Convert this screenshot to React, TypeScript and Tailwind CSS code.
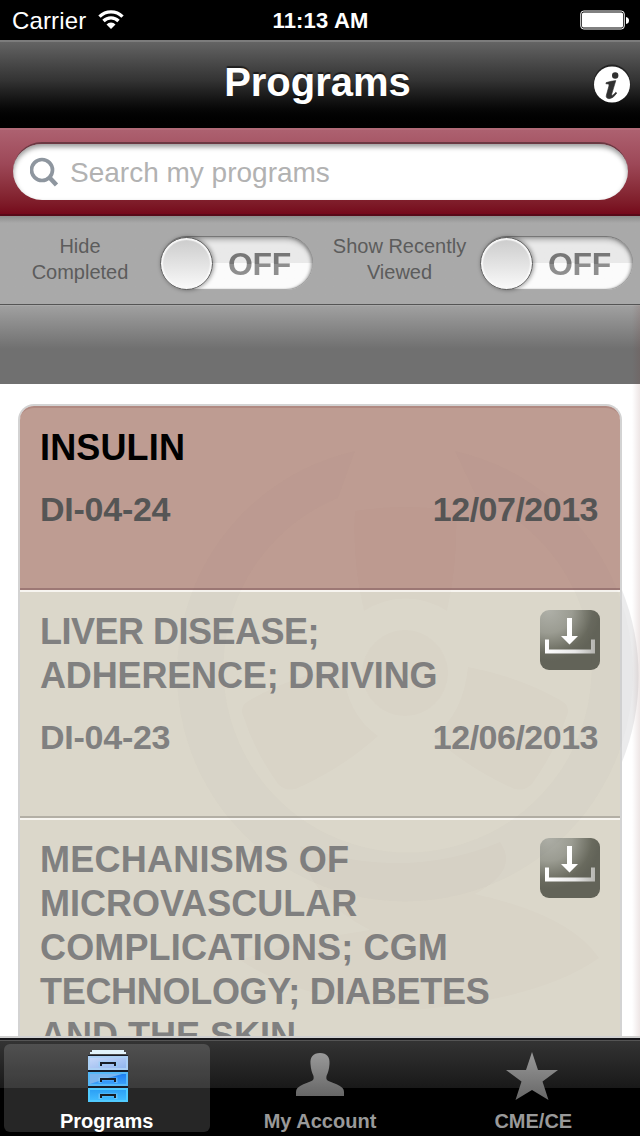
import React, { FC, ReactNode } from "react";

type TitleLine = { text: string; className?: string };

type Program = {
  title: TitleLine[];
  code?: string;
  date?: string;
  downloaded?: boolean;
};

const programs: Program[] = [
  {
    title: [{ text: "INSULIN", className: "tracking-[0.15px]" }],
    code: "DI-04-24",
    date: "12/07/2013",
    downloaded: true,
  },
  {
    title: [
      { text: "LIVER DISEASE;", className: "tracking-[-0.5px]" },
      { text: "ADHERENCE; DRIVING", className: "tracking-[-0.15px]" },
    ],
    code: "DI-04-23",
    date: "12/06/2013",
  },
  {
    title: [
      { text: "MECHANISMS OF", className: "tracking-[0.25px]" },
      { text: "MICROVASCULAR" },
      { text: "COMPLICATIONS; CGM", className: "tracking-[0.15px]" },
      { text: "TECHNOLOGY; DIABETES", className: "tracking-[-0.3px]" },
      { text: "AND THE SKIN" },
    ],
  },
];

const StatusBar = () => (
  <div className="grid h-10 grid-cols-3 items-center bg-black pr-[11px] pl-3 text-white">
    <div className="flex items-center gap-3">
      <span className="pt-px text-2xl tracking-[0.15px]">Carrier</span>
      <svg width="26" height="20" viewBox="0 0 26 20" fill="none">
        <path d="M1.500 6.700a16 16 0 0 1 23 0" stroke="#fff" strokeWidth="3.300" />
        <path d="M5.500 11a10.500 10.500 0 0 1 15 0" stroke="#fff" strokeWidth="3.300" />
        <path d="M13 19l-4.500-4.500a6 6 0 0 1 9 0z" fill="#fff" />
      </svg>
    </div>
    <span className="pt-px text-center text-[22px] font-bold tracking-[0.2px]">11:13 AM</span>
    <svg className="justify-self-end" width="49" height="20" viewBox="0 0 49 20">
      <rect x=".75" y="1" width="43.5" height="18" rx="3" fill="none" stroke="#fff" />
      <rect x="2" y="2.5" width="41" height="15" rx="1.5" fill="#fff" />
      <path d="M46 7q3 .5 3 3.5t-3 3.5z" fill="#fff" />
    </svg>
  </div>
);

const NavBar = () => (
  <div className="grid h-[88px] grid-cols-[1fr_auto_1fr] items-center border-t-2 border-[#7c7c7c] bg-linear-to-b from-[#646464] via-[#333] via-45% to-black pr-[9px] pl-1">
    <span />
    <h1 className="pb-1.5 text-[40px] leading-[46px] font-bold text-white [text-shadow:0_-2px_1px_rgba(0,0,0,.55)]">
      Programs
    </h1>
    <svg className="mb-0.5 justify-self-end" width="38" height="40" viewBox="0 0 38 40">
      <circle cx="19" cy="19" r="18.5" fill="#222" />
      <circle cx="19" cy="20.5" r="18" fill="#fff" />
      <circle cx="22.2" cy="11.5" r="3.2" fill="#303030" />
      <path
        d="M13.200 18.600q5-1.600 9.600-2l-4 13.200q-.5 1.700.5 1.600 1.300-.2 3.400-3.100l1.100.8q-3.700 5.700-7.700 5.600-3.600-.2-2.700-3.600l2.500-9q.6-2-.7-2.200l-2.300-.1z"
        fill="#303030"
        stroke="#303030"
        strokeWidth=".6"
      />
    </svg>
  </div>
);

const SearchBar = () => (
  <div className="h-[88px] border-t-2 border-b-2 border-t-[#b06a77] border-b-[#580918] bg-linear-to-b from-[#ad6170] via-[#9d4858] via-40% to-[#75081b] pt-3 pr-3 pl-[13px]">
    <div className="flex h-[58px] items-center rounded-full border-t-2 border-[#6b3842] bg-white pl-[17px] shadow-[inset_0_3px_5px_rgba(0,0,0,.4)]">
      <svg width="29" height="31" viewBox="0 0 29 31" fill="none" stroke="#8e969f">
        <circle cx="12" cy="13" r="10.5" strokeWidth="3.7" />
        <path d="M19 20l7.500 8" strokeWidth="4.5" />
      </svg>
      <span className="pt-0.5 pl-[11px] text-[28px] text-[#b2b2b2]">Search my programs</span>
    </div>
  </div>
);

const Toggle = () => (
  <div className="flex h-[54px] w-[153px] items-center rounded-full border-t border-[#777] bg-linear-to-b from-[#e9e9e9] from-50% to-[#fbfbfb] to-50% shadow-[inset_0_3px_5px_rgba(0,0,0,.25),inset_-2px_0_3px_rgba(0,0,0,.25),inset_0_-1px_1px_#bbb]">
    <div className="h-[53px] w-[53px] shrink-0 rounded-full border border-[#5c5c5c] bg-linear-to-b from-[#cbcbcb] to-[#fafafa] shadow-[inset_0_0_1px_2px_#f8f8f8,1px_0_4px_rgba(0,0,0,.4)]" />
    <span className="bg-linear-to-b from-[#777] from-50% to-[#8e8e8e] to-50% bg-clip-text pl-[15px] text-[32px] leading-[38px] font-bold tracking-[-0.4px] text-transparent">
      OFF
    </span>
  </div>
);

const FilterLabel: FC<{ children: ReactNode }> = ({ children }) => (
  <p className="pb-[3px] text-center text-xl leading-[26px] text-[#5c5c5c]">{children}</p>
);

const Filters = () => (
  <div className="grid h-[89px] grid-cols-[160px_153px_173px_154px] items-center border-b border-[#555] bg-linear-to-b from-[#8c8c8c] to-[#a9a9a9] to-8%">
    <FilterLabel>
      Hide
      <br />
      Completed
    </FilterLabel>
    <div className="pt-1.5">
      <Toggle />
    </div>
    <FilterLabel>
      Show Recently
      <br />
      Viewed
    </FilterLabel>
    <div className="-ml-[6px] pt-1.5">
      <Toggle />
    </div>
  </div>
);

const DownloadIcon: FC<{ id: string }> = ({ id }) => (
  <svg className="h-[60px] w-[60px] shrink-0" viewBox="0 0 60 60">
    <defs>
      <radialGradient id={id} cx=".15" cy="0" r=".85">
        <stop offset="0" stopColor="#afb0a8" />
        <stop offset=".45" stopColor="#9b9c92" />
        <stop offset=".85" stopColor="#696a5e" />
        <stop offset="1" stopColor="#626358" />
      </radialGradient>
      <linearGradient id={`${id}-tray`} x1="0" x2="1">
        <stop offset="0" stopColor="#fff" />
        <stop offset=".6" stopColor="#e8e8e8" />
        <stop offset="1" stopColor="#b5b5b0" />
      </linearGradient>
    </defs>
    <rect width="60" height="60" rx="9" fill={`url(#${id})`} />
    <path d="M5 29.500h4V39.500h42V29.500h4V43.500H5z" fill={`url(#${id}-tray)`} />
    <path d="M27 8h5v18h6l-8.500 8.500L21 26h6z" fill="#fff" />
  </svg>
);

const ProgramRow: FC<{ program: Program; index: number }> = ({ program, index }) => (
  <li
    className={
      program.downloaded
        ? "h-[184px] rounded-t-[14px] border-t-2 border-b-2 border-t-[#b08981] border-b-[#9d7875] bg-[#be9c92] pt-[18px]"
        : "min-h-[228px] border-t-2 border-b-2 border-t-[#f7f5f0] border-b-[#b3afa5] bg-[#dbd7ca] pt-[18px]"
    }
  >
    <div className="flex justify-between px-5">
      <h2
        className={`text-4xl leading-[44px] font-bold ${
          program.downloaded ? "text-black" : "text-[#808080]"
        }`}
      >
        {program.title.map((line) => (
          <span key={line.text} className={`block whitespace-nowrap ${line.className ?? ""}`}>
            {line.text}
          </span>
        ))}
      </h2>
      {!program.downloaded && <DownloadIcon id={`download-${index}`} />}
    </div>
    {program.code && (
      <div
        className={`mt-[19px] flex justify-between pr-[22px] pl-5 text-[34px] leading-10 font-bold ${
          program.downloaded ? "text-[#555]" : "text-[#808080]"
        }`}
      >
        <span className="tracking-[-0.25px]">{program.code}</span>
        <span className="tracking-[-0.5px]">{program.date}</span>
      </div>
    )}
  </li>
);

// Faint emblem that shows through the list
const Watermark = () => (
  <svg
    className="pointer-events-none absolute top-0 left-0"
    width="640"
    height="652"
    viewBox="0 384 640 652"
  >
    <g fill="#645f50" fillOpacity=".015">
      <path d="M355 451A228 228 0 1 0 455 451L477 498A184 184 0 1 1 338 498Z" fillOpacity=".018" />
      <path d="M355 511Q405 503 456 511Q458 562 447 611A75 75 0 0 0 364 611Q352 560 355 511Z" />
      <circle cx="405" cy="673" r="43" />
      <path d="M468 667Q520 677 560 700Q572 706 566 718Q556 750 532 784Q522 794 508 786Q465 766 433 736Q463 715 468 667Z" />
      <path d="M342 667Q290 677 250 700Q238 706 244 718Q254 750 278 784Q288 794 302 786Q345 766 378 736Q347 715 342 667Z" />
      <path d="M300 846Q405 882 500 842Q520 870 475 894Q570 915 599 958Q540 1000 410 1010Q300 1000 240 960Q300 940 370 930Q310 900 300 846Z" />
    </g>
    <path d="M622 590A231 231 0 0 1 622 762Z" fill="#777b80" fillOpacity=".15" />
  </svg>
);

const ProgramList = () => (
  <div className="relative h-[652px] overflow-hidden bg-white px-[18px] pt-5">
    <ul className="rounded-t-2xl border-x-2 border-t-2 border-[#d3d3d3]">
      {programs.map((program, i) => (
        <ProgramRow key={program.title[0].text} program={program} index={i} />
      ))}
    </ul>
    <Watermark />
  </div>
);

const Tab: FC<{ label: string; active?: boolean; children: ReactNode }> = ({
  label,
  active,
  children,
}) => (
  <div className="flex flex-1 px-[3.5px] pt-1 pb-1">
    <div
      className={`flex flex-1 flex-col items-center justify-between rounded-md pt-[5px] ${
        active ? "bg-white/15 text-white" : "text-[#999]"
      }`}
    >
      {children}
      <span className="text-xl leading-[22px] font-bold">{label}</span>
    </div>
  </div>
);

const CabinetIcon = () => (
  <svg className="mt-px ml-[3px]" width="44" height="55" viewBox="0 0 44 55">
    <defs>
      <linearGradient id="drawer-top" x1="0" y1="0" x2="1" y2="1">
        <stop offset="0" stopColor="#c8d9fa" />
        <stop offset="1" stopColor="#8fb4ed" />
      </linearGradient>
      <linearGradient id="drawer-middle" x1="0" y1="0" x2="0" y2="1">
        <stop offset="0" stopColor="#1a7af2" />
        <stop offset="1" stopColor="#3da4fa" />
      </linearGradient>
      <linearGradient id="drawer-bottom" x1="0" y1="0" x2="0" y2="1">
        <stop offset="0" stopColor="#2b9df4" />
        <stop offset="1" stopColor="#42bdff" />
      </linearGradient>
    </defs>
    <rect x="2" y="5" width="40" height="47" fill="#161c28" />
    <path d="M6 0h32v2h2v2H4V2h2z" fill="#e2f3fb" />
    <rect x="3" y="7" width="38" height="12" fill="url(#drawer-top)" stroke="#acd0f5" strokeWidth="2" />
    <rect x="3" y="23" width="38" height="12" fill="url(#drawer-middle)" stroke="#55b8f8" strokeWidth="2" />
    <path d="M4 24h32L22 28 4 34z" fill="#79b4ee" />
    <rect x="3" y="39" width="38" height="12" fill="url(#drawer-bottom)" stroke="#51cbff" strokeWidth="2" />
    <path
      d="M14 17v-4h16v4M14 33v-4h16v4M14 49v-4h16v4"
      fill="none"
      stroke="#8fd4fa"
      strokeOpacity=".5"
      strokeWidth="3"
    />
    <path d="M15 16v-3h14v3M15 32v-3h14v3M15 48v-3h14v3" fill="none" stroke="#181d26" strokeWidth="2" />
  </svg>
);

const PersonIcon = () => (
  <svg width="48" height="56" viewBox="0 0 48 56">
    <defs>
      <linearGradient id="tab-grey" x1="0" y1="0" x2="0" y2="1">
        <stop offset="0" stopColor="#9a9a9a" />
        <stop offset="1" stopColor="#666" />
      </linearGradient>
    </defs>
    <path
      d="M24 4c7 0 10 4 9.500 11c-.3 5-1.500 9-3 12c-.5 3 0 4 2 5c6 2.500 11 4 14 7q1.500 1.500 1.500 4v4H0v-4q0-2.500 1.500-4c3-3 8-4.500 14-7c2-1 2.500-2 2-5c-1.500-3-2.700-7-3-12C14 8 17 4 24 4z"
      fill="url(#tab-grey)"
    />
  </svg>
);

const StarIcon = () => (
  <svg className="-ml-0.5" width="52" height="56" viewBox="0 0 52 56">
    <path
      d="M26 3l6 18h20L36.500 32.500l6 18.500L26 41 9.500 51l6-18.500L0 21h20z"
      fill="url(#tab-grey)"
    />
  </svg>
);

const TabBar = () => (
  <div className="h-[100px] border-t-2 border-[#d0d0d0]">
    <div className="flex h-[98px] border-t-2 border-[#151519] bg-black bg-linear-to-b from-[#343434] to-[#191919] bg-[length:100%_48px] bg-no-repeat shadow-[inset_0_1px_0_#555]">
      <Tab label="Programs" active>
        <CabinetIcon />
      </Tab>
      <Tab label="My Account">
        <PersonIcon />
      </Tab>
      <Tab label="CME/CE">
        <StarIcon />
      </Tab>
    </div>
  </div>
);

const App = () => {
  return (
    <div className="h-[1136px] w-[640px] overflow-hidden bg-white font-['Liberation_Sans',Arial,sans-serif]">
      <StatusBar />
      <NavBar />
      <SearchBar />
      <Filters />
      <div className="relative">
        <div className="h-[79px] border-t border-[#aaa] bg-linear-to-b from-[#a0a0a0] to-[#707070] to-55%" />
        <ProgramList />
        <div className="absolute inset-y-0 right-0 w-2 bg-linear-to-r from-transparent to-[#6b2d28]/12" />
      </div>
      <TabBar />
    </div>
  );
};

export default App;
